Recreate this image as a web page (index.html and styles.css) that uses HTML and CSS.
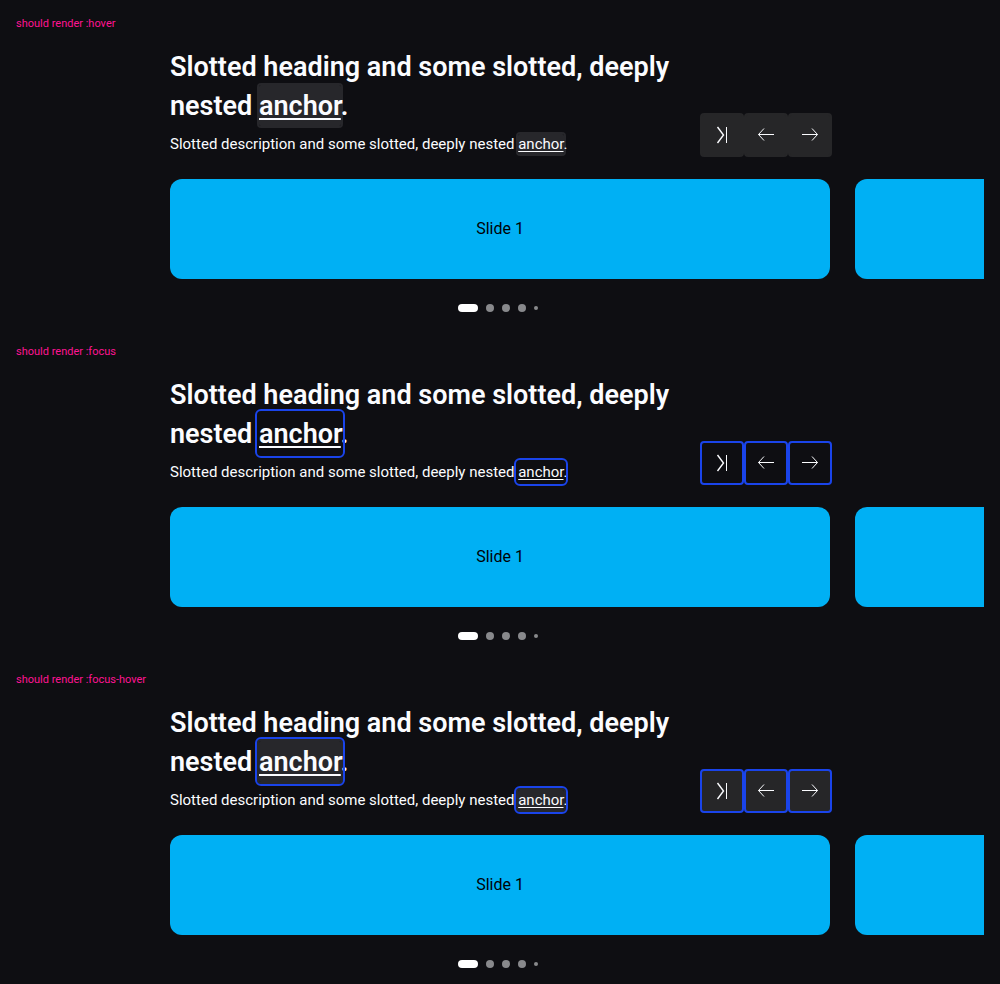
FILE: index.html
```
<!DOCTYPE html>
<html lang="en">
<head>
<meta charset="utf-8">
<title>Carousel states</title>
<link rel="stylesheet" href="styles.css">
</head>
<body>
<svg class="sprite" aria-hidden="true">
  <symbol id="skip" viewBox="0 0 24 24"><path stroke-width="1.400" d="M7.500 4l6 8-6 8"/><path d="M16.500 4v16"/></symbol>
  <symbol id="prev" viewBox="0 0 24 24"><path d="M20 11.500H4.500M10 5.500l-5.500 6 5.500 6"/></symbol>
  <symbol id="next" viewBox="0 0 24 24"><path d="M4 11.500h15.500M14 5.500l5.500 6-5.500 6"/></symbol>
</svg>
<main class="page">
  <section class="state hover">
    <p class="label">should render :hover</p>
    <div class="header">
      <div class="intro">
        <h2 class="heading">Slotted heading and some slotted, deeply nested <a class="anchor" href="#">anchor</a>.</h2>
        <p class="description">Slotted description and some slotted, deeply nested <a class="anchor" href="#">anchor</a>.</p>
      </div>
      <div class="nav">
        <button class="btn" type="button" aria-label="Skip carousel"><svg class="icon"><use href="#skip"/></svg></button>
        <button class="btn" type="button" aria-label="Previous"><svg class="icon"><use href="#prev"/></svg></button>
        <button class="btn" type="button" aria-label="Next"><svg class="icon"><use href="#next"/></svg></button>
      </div>
    </div>
    <div class="track"><div class="slide">Slide 1</div><div class="slide"></div></div>
    <div class="dots"><span class="dot active"></span><span class="dot"></span><span class="dot"></span><span class="dot"></span><span class="dot small"></span></div>
  </section>
  <section class="state focus">
    <p class="label">should render :focus</p>
    <div class="header">
      <div class="intro">
        <h2 class="heading">Slotted heading and some slotted, deeply nested <a class="anchor" href="#">anchor</a>.</h2>
        <p class="description">Slotted description and some slotted, deeply nested <a class="anchor" href="#">anchor</a>.</p>
      </div>
      <div class="nav">
        <button class="btn" type="button" aria-label="Skip carousel"><svg class="icon"><use href="#skip"/></svg></button>
        <button class="btn" type="button" aria-label="Previous"><svg class="icon"><use href="#prev"/></svg></button>
        <button class="btn" type="button" aria-label="Next"><svg class="icon"><use href="#next"/></svg></button>
      </div>
    </div>
    <div class="track"><div class="slide">Slide 1</div><div class="slide"></div></div>
    <div class="dots"><span class="dot active"></span><span class="dot"></span><span class="dot"></span><span class="dot"></span><span class="dot small"></span></div>
  </section>
  <section class="state hover focus">
    <p class="label">should render :focus-hover</p>
    <div class="header">
      <div class="intro">
        <h2 class="heading">Slotted heading and some slotted, deeply nested <a class="anchor" href="#">anchor</a>.</h2>
        <p class="description">Slotted description and some slotted, deeply nested <a class="anchor" href="#">anchor</a>.</p>
      </div>
      <div class="nav">
        <button class="btn" type="button" aria-label="Skip carousel"><svg class="icon"><use href="#skip"/></svg></button>
        <button class="btn" type="button" aria-label="Previous"><svg class="icon"><use href="#prev"/></svg></button>
        <button class="btn" type="button" aria-label="Next"><svg class="icon"><use href="#next"/></svg></button>
      </div>
    </div>
    <div class="track"><div class="slide">Slide 1</div><div class="slide"></div></div>
    <div class="dots"><span class="dot active"></span><span class="dot"></span><span class="dot"></span><span class="dot"></span><span class="dot small"></span></div>
  </section>
</main>
</body>
</html>
```
FILE: styles.css
```
* { box-sizing: border-box; }
body {
  margin: 0;
  background: #0e0e12;
  color: #fbfcff;
  font-family: Roboto, "Liberation Sans", sans-serif;
  font-size: 16px;
  line-height: 24px;
}
.sprite { display: none; }
.page {
  display: flex;
  flex-direction: column;
  gap: 32px;
  padding: 16px 16px 0;
}
.label {
  margin: 0 0 16px;
  color: #ff1493;
  font-size: 11px;
  line-height: 16px;
}
.header {
  display: flex;
  align-items: flex-end;
  justify-content: space-between;
  gap: 24px;
  margin: 0 calc(17vw - 18px) 22px calc(17vw - 16px);
}
.heading {
  margin: 0 0 6px;
  font-size: 27px;
  font-weight: 600;
  line-height: 39px;
}
.intro { padding-bottom: 1px; }
.description { margin: 0; font-size: 15px; }
.anchor {
  padding: 1px 0;
  border-radius: 2px;
  color: inherit;
  text-decoration: underline;
  text-underline-offset: 2px;
}
.heading .anchor { padding: 5px 0 4px; text-underline-offset: 3px; }
.nav { display: flex; flex: none; }
.btn {
  display: grid;
  place-items: center;
  width: 44px;
  height: 44px;
  padding: 0;
  border: 2px solid transparent;
  border-radius: 4px;
  background: transparent;
  color: inherit;
}
.icon {
  width: 24px;
  height: 24px;
  fill: none;
  stroke: currentColor;
}
.hover .anchor { background: #27272b; box-shadow: 0 0 0 2px #27272b; }
.hover .btn { background: #262628; border-color: #262628; }
.focus .anchor { outline: 2px solid #1a44ea; outline-offset: 2px; }
.focus .btn { border-color: #1a44ea; }
.track {
  display: flex;
  gap: 25px;
  padding-left: calc(17vw - 16px);
  overflow: hidden;
}
.slide {
  display: grid;
  flex: none;
  place-items: center;
  width: 66vw;
  height: 100px;
  border-radius: 12px;
  background: #00b0f4;
  color: #010205;
}
.dots {
  display: flex;
  align-items: center;
  justify-content: center;
  gap: 8px;
  height: 8px;
  margin-top: 25px;
  padding-right: 4px;
}
.dot {
  width: 8px;
  height: 8px;
  border-radius: 4px;
  background: #88898c;
}
.active { width: 20px; background: #fff; }
.small { width: 4px; height: 4px; }
```
